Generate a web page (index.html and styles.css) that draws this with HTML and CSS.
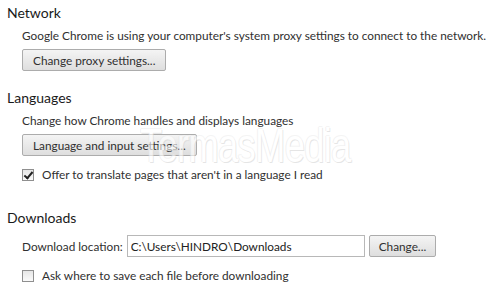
FILE: index.html
```html
<!DOCTYPE html>
<html lang="en">
  <head>
    <meta charset="UTF-8" />
    <title>Settings</title>
    <link rel="stylesheet" href="styles.css">
  </head>
  <body>
    <div class="settings">
      <section class="section">
        <h3 class="section-title">Network</h3>
        <div class="section-body">
          <p class="desc">Google Chrome is using your computer's system proxy settings to connect to the network.</p>
          <button class="btn">Change proxy settings...</button>
        </div>
      </section>

      <section class="section">
        <h3 class="section-title">Languages</h3>
        <div class="section-body">
          <p class="desc">Change how Chrome handles and displays languages</p>
          <button class="btn">Language and input settings...</button>
          <label class="check-row">
            <span class="checkbox checked"></span>
            Offer to translate pages that aren't in a language I read
          </label>
        </div>
      </section>

      <section class="section">
        <h3 class="section-title">Downloads</h3>
        <div class="section-body">
          <div class="location-row">
            <span class="location-label">Download location:</span>
            <input class="location-input" type="text" value="C:\Users\HINDRO\Downloads" />
            <button class="btn btn-small">Change...</button>
          </div>
          <label class="check-row">
            <span class="checkbox"></span>
            Ask where to save each file before downloading
          </label>
        </div>
      </section>

      <div class="watermark">TermasMedia</div>
    </div>
  </body>
</html>
```

FILE: styles.css
```css
* {
  margin: 0;
  padding: 0;
  box-sizing: border-box;
}

body {
  background: #fff;
  font-family: Lato, "Noto Sans", sans-serif;
  color: #222;
}

.settings {
  position: relative;
  padding: 4px 7px 0;
}

.section-title {
  font-size: 14px;
  font-weight: normal;
  line-height: 18px;
  color: #1a1a1a;
}

.section + .section {
  margin-top: 18px;
}

.section:last-of-type {
  margin-top: 26px;
}

.section-body {
  padding-left: 15px;
}

.desc {
  font-size: 11.8px;
  line-height: 16px;
  margin-top: 6px;
  white-space: nowrap;
  color: #303030;
}

.btn {
  display: block;
  height: 22px;
  margin-top: 5px;
  padding: 0 10px;
  border: 1px solid #acacac;
  border-radius: 2px;
  background: linear-gradient(#f4f4f4, #dedede);
  font-family: inherit;
  font-size: 11.8px;
  color: #303030;
}

.check-row {
  display: flex;
  align-items: center;
  gap: 8px;
  margin-top: 11px;
  font-size: 11.8px;
  line-height: 16px;
  white-space: nowrap;
  color: #303030;
}

.checkbox {
  position: relative;
  width: 12px;
  height: 12px;
  border: 1px solid #8f8f8f;
  background: linear-gradient(#e6e6e6, #fafafa);
}

.checkbox.checked::after {
  content: "";
  position: absolute;
  left: 3px;
  top: 0;
  width: 3px;
  height: 7px;
  border: solid #222;
  border-width: 0 2px 2px 0;
  transform: rotate(40deg);
}

.location-row {
  display: flex;
  align-items: center;
  margin-top: 8px;
  font-size: 11.8px;
  color: #303030;
}

.location-label {
  margin-right: 4px;
}

.location-input {
  width: 238px;
  height: 22px;
  padding: 0 3px;
  border: 1px solid #b8b8b8;
  font-family: inherit;
  font-size: 11.8px;
  color: #222;
  outline: none;
}

.btn-small {
  margin: 0 0 0 4px;
  padding: 0 9px;
}

/* semi-transparent watermark over the content */
.watermark {
  position: absolute;
  left: 140px;
  top: 128px;
  font-family: "Liberation Sans Narrow", "Liberation Sans", sans-serif;
  font-size: 48px;
  line-height: 36px;
  letter-spacing: -1px;
  color: #fff;
  transform: scaleX(0.76);
  transform-origin: left top;
  text-shadow: 1px 1px 0 #d4d4d4, -1px 0 0 #e6e6e6, 0 -1px 0 #eeeeee;
  opacity: 0.6;
  pointer-events: none;
}
```
